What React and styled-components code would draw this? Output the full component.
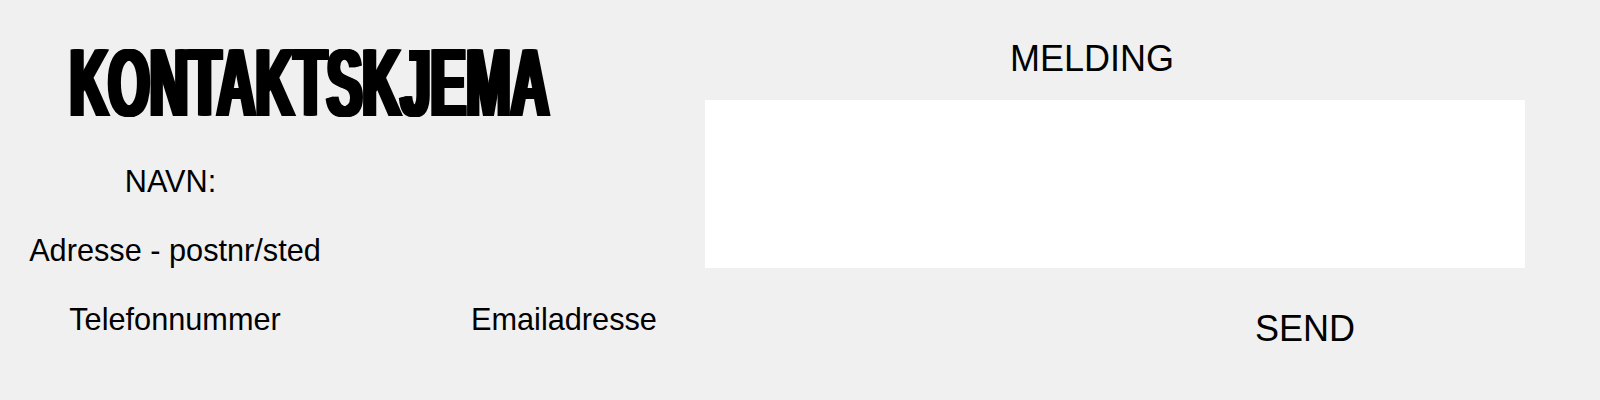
import React from "react";
import styled, { createGlobalStyle } from "styled-components";

const GlobalStyle = createGlobalStyle`
  html, body {
    margin: 0;
    padding: 0;
    background: #f0f0f0;
  }
  body {
    font-family: "Liberation Sans", Arial, sans-serif;
    color: #000;
  }
`;

const Page = styled.main`
  display: flex;
  width: 1600px;
  height: 400px;
  background: #f0f0f0;
`;

const LeftPane = styled.section`
  width: 705px;
  padding-top: 40px;
  box-sizing: border-box;
  display: flex;
  flex-direction: column;
`;

/* Heavy condensed display heading: bold face squeezed horizontally,
   stems thickened with stacked horizontal shadows */
const Title = styled.h1`
  margin: 0 0 21px 67px;
  height: 86px;
  line-height: 86px;
  font-family: "Liberation Sans", Arial, sans-serif;
  font-weight: 700;
  font-size: 96px;
  letter-spacing: 0;
  white-space: nowrap;
  text-shadow: 2px 0 #000, 4px 0 #000, 6px 0 #000, 8px 0 #000, 10px 0 #000;
  transform: scaleX(0.556);
  transform-origin: 0 50%;
`;

const Row = styled.div`
  display: grid;
  grid-template-columns: 350px 1fr;
  height: 69px;
  align-items: center;
`;

const FieldLabel = styled.label`
  font-size: 30.7px;
  line-height: 69px;
  white-space: nowrap;
  text-align: ${(p) => (p.$align === "left" ? "left" : "center")};
  padding-left: ${(p) => p.$indent || 0}px;
  padding-right: ${(p) => p.$trail || 0}px;
`;

const RightPane = styled.section`
  width: 820px;
  display: flex;
  flex-direction: column;
`;

const MessageLabel = styled.label`
  margin: 37px 0 0 305px;
  font-size: 36px;
  line-height: 44px;
  white-space: nowrap;
`;

const MessageBox = styled.textarea`
  margin-top: 19px;
  width: 820px;
  height: 168px;
  box-sizing: border-box;
  border: none;
  outline: none;
  resize: none;
  background: #fff;
  padding: 8px;
  font-family: "Liberation Sans", Arial, sans-serif;
  font-size: 18px;
`;

const SendButton = styled.button`
  align-self: flex-start;
  margin: 39px 0 0 550px;
  padding: 0;
  border: none;
  background: transparent;
  font-family: "Liberation Sans", Arial, sans-serif;
  font-size: 36px;
  line-height: 44px;
  color: #000;
  cursor: pointer;
`;

export default function App() {
  return (
    <>
      <GlobalStyle />
      <Page>
        <LeftPane>
          <Title>KONTAKTSKJEMA</Title>
          <Row>
            <FieldLabel $trail={9}>NAVN:</FieldLabel>
          </Row>
          <Row>
            <FieldLabel>Adresse - postnr/sted</FieldLabel>
          </Row>
          <Row>
            <FieldLabel>Telefonnummer</FieldLabel>
            <FieldLabel $align="left" $indent={121}>
              Emailadresse
            </FieldLabel>
          </Row>
        </LeftPane>
        <RightPane>
          <MessageLabel>MELDING</MessageLabel>
          <MessageBox aria-label="Melding" />
          <SendButton type="button">SEND</SendButton>
        </RightPane>
      </Page>
    </>
  );
}
